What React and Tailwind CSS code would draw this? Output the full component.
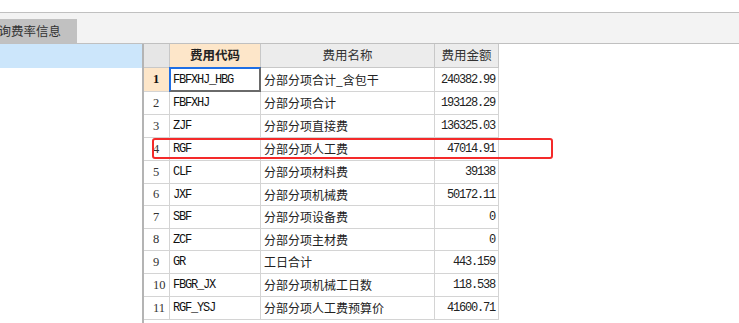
import React from 'react';

const rows = [
  { no: 1, code: 'FBFXHJ_HBG', name: '分部分项合计_含包干', amount: '240382.99', h: 'h-[24px]' },
  { no: 2, code: 'FBFXHJ', name: '分部分项合计', amount: '193128.29', h: 'h-[23px]' },
  { no: 3, code: 'ZJF', name: '分部分项直接费', amount: '136325.03', h: 'h-[23px]' },
  { no: 4, code: 'RGF', name: '分部分项人工费', amount: '47014.91', h: 'h-[23px]' },
  { no: 5, code: 'CLF', name: '分部分项材料费', amount: '39138', h: 'h-[23px]' },
  { no: 6, code: 'JXF', name: '分部分项机械费', amount: '50172.11', h: 'h-[22px]' },
  { no: 7, code: 'SBF', name: '分部分项设备费', amount: '0', h: 'h-[23px]' },
  { no: 8, code: 'ZCF', name: '分部分项主材费', amount: '0', h: 'h-[22px]' },
  { no: 9, code: 'GR', name: '工日合计', amount: '443.159', h: 'h-[23px]' },
  { no: 10, code: 'FBGR_JX', name: '分部分项机械工日数', amount: '118.538', h: 'h-[23px]' },
  { no: 11, code: 'RGF_YSJ', name: '分部分项人工费预算价', amount: '41600.71', h: 'h-[23px]' },
];

const cjk = "font-['Noto_Sans_CJK_SC',sans-serif]";
const mono = "font-['Liberation_Mono',monospace] text-[12px] tracking-[-1.2px]";

export default function App() {
  return (
    <div className={`relative w-[739px] h-[323px] overflow-hidden bg-white text-[#222] ${cjk}`}>
      <div className="h-[12px]" />

      {/* tab strip */}
      <div className="h-[32px] border-y border-[#c0c0c0] bg-[#f3f3f3] flex items-end">
        <div className="w-[77px] h-[24px] bg-[#c1c1c1] overflow-hidden flex items-center">
          <span className="ml-[-14px] whitespace-nowrap text-[12.5px] leading-none text-[#333]">查询费率信息</span>
        </div>
      </div>

      <div className="flex">
        {/* left panel */}
        <div className="w-[142px]">
          <div className="h-[24px] bg-[#cce6fb]" />
        </div>

        {/* grid */}
        <div className="border-l-2 border-[#b4b4b4] h-[279px]">
          <div className="grid grid-cols-[26px_91px_174px_64px] h-[24px] text-[12.5px] border-b border-[#c8c8c8]">
            <div className="bg-[#e6e6e6] border-r border-[#c8c8c8]" />
            <div className="bg-[#fde6c9] border-r border-[#c8c8c8] flex items-center justify-center font-bold text-[#222]">费用代码</div>
            <div className="bg-[#ececec] border-r border-[#c8c8c8] flex items-center justify-center text-[#333]">费用名称</div>
            <div className="bg-[#ececec] border-r border-[#c8c8c8] flex items-center justify-center text-[#333]">费用金额</div>
          </div>

          {rows.map((r) => (
            <div key={r.no} className={`grid grid-cols-[26px_91px_174px_64px] ${r.h} border-b border-[#d4d4d4]`}>
              <div
                className={`border-r border-[#d4d4d4] flex items-center pl-[9px] font-['Liberation_Serif',serif] text-[12.5px] ${
                  r.no === 1 ? 'bg-[#fde6c9] font-bold text-[#111]' : 'text-[#333]'
                }`}
              >
                {r.no}
              </div>
              <div className="relative border-r border-[#d4d4d4] flex items-center pl-[3px]">
                {r.no === 1 && (
                  <div className="absolute left-[-1px] top-[-1px] right-[-1px] bottom-[-1px] border-2 border-t-[#1f6fe5] border-l-[#1f6fe5] border-r-[#6a6a6a] border-b-[#6a6a6a]" />
                )}
                <span className={`${mono} text-[#111]`}>{r.code}</span>
              </div>
              <div className="border-r border-[#d4d4d4] flex items-center pl-[3px] text-[12px] text-[#222] whitespace-nowrap">
                {r.name}
              </div>
              <div className="border-r border-[#d4d4d4] flex items-center justify-end pr-[3px]">
                <span className={`${mono} text-[#222]`}>{r.amount}</span>
              </div>
            </div>
          ))}
        </div>
      </div>

      {/* red highlight */}
      <div className="absolute left-[152px] top-[138px] w-[401px] h-[21px] border-2 border-[#f42a2a] rounded-[3px]" />
    </div>
  );
}
